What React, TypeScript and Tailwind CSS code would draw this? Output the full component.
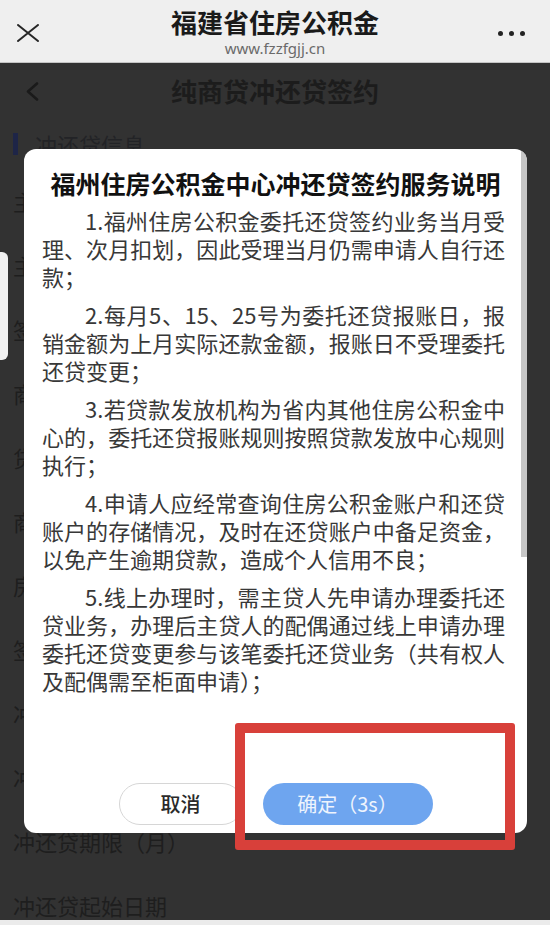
import React from "react";

const cjk = { fontFamily: '"Noto Sans CJK SC", "Noto Sans", sans-serif' };

const rows = [
  "主贷人姓名",
  "主贷人证件号码",
  "签约银行",
  "商贷合同编号",
  "贷款银行",
  "商贷余额（元）",
  "房屋坐落",
  "签约账号",
  "冲还贷方式",
  "冲还贷类型",
  "冲还贷期限（月）",
  "冲还贷起始日期",
];

const paragraphs = [
  ["1.福州住房公积金委托还贷签约业务当月受", "理、次月扣划，因此受理当月仍需申请人自行还", "款；"],
  ["2.每月5、15、25号为委托还贷报账日，报", "销金额为上月实际还款金额，报账日不受理委托", "还贷变更；"],
  ["3.若贷款发放机构为省内其他住房公积金中", "心的，委托还贷报账规则按照贷款发放中心规则", "执行；"],
  ["4.申请人应经常查询住房公积金账户和还贷", "账户的存储情况，及时在还贷账户中备足资金，", "以免产生逾期贷款，造成个人信用不良；"],
  [
    "5.线上办理时，需主贷人先申请办理委托还",
    "贷业务，办理后主贷人的配偶通过线上申请办理",
    "委托还贷变更参与该笔委托还贷业务（共有权人",
    "及配偶需至柜面申请）；",
  ],
];

export default function App() {
  return (
    <div className="relative w-[550px] h-[925px] overflow-hidden flex flex-col bg-[#323232]" style={cjk}>
      {/* browser header */}
      <div className="relative h-[63px] shrink-0 bg-[#efefef] border-b border-[#c4c4c4] flex flex-col items-center pt-[7px]">
        <svg className="absolute left-[17px] top-[24px]" width="22" height="18" viewBox="0 0 22 18">
          <path d="M1 1 L21 17 M21 1 L1 17" stroke="#262626" strokeWidth="2" strokeLinecap="round" />
        </svg>
        <div className="text-[26px] leading-[30px] font-semibold text-[#1a1a1a]">福建省住房公积金</div>
        <div className="text-[15px] leading-[18px] mt-[2px] text-[#6a6a6a]" style={{ fontFamily: '"Noto Sans", sans-serif' }}>
          www.fzzfgjj.cn
        </div>
        <div className="absolute right-[25px] top-[31px] flex gap-[6px]">
          <span className="w-[5px] h-[5px] rounded-full bg-[#222]" />
          <span className="w-[5px] h-[5px] rounded-full bg-[#222]" />
          <span className="w-[5px] h-[5px] rounded-full bg-[#222]" />
        </div>
      </div>

      {/* dimmed page */}
      <div className="relative h-[56px] shrink-0 flex items-center justify-center">
        <svg className="absolute left-[25px] top-[19px]" width="14" height="19" viewBox="0 0 14 19">
          <path d="M12 1.5 L3 9.5 L12 17.5" fill="none" stroke="#1a1a1a" strokeWidth="2.6" strokeLinecap="round" strokeLinejoin="round" />
        </svg>
        <div className="text-[26px] leading-[30px] font-semibold text-[#1c1c1c]">纯商贷冲还贷签约</div>
      </div>

      <div className="h-[50px] shrink-0 flex items-start pt-[14px] pl-[13px]">
        <div className="w-[5px] h-[22px] bg-[#1e2547]" />
        <div className="ml-[17px] -mt-[1px] text-[22px] leading-[24px] text-[#222326]">冲还贷信息</div>
      </div>

      <div className="flex-1 overflow-hidden">
        {rows.map((r) => (
          <div key={r} className="h-[64px] flex items-center pl-[13px] text-[22px] text-[#1e1e1e]">
            {r}
          </div>
        ))}
      </div>
      <div className="h-[5px] shrink-0 bg-[#ebebeb]" />

      {/* floating side tab */}
      <div className="absolute left-0 top-[252px] w-[8px] h-[108px] rounded-r-[6px] bg-[#f1f1f1]" />

      {/* dialog */}
      <div className="absolute left-[24px] top-[149px] w-[503px] h-[684px] rounded-[12px] bg-white overflow-hidden flex flex-col">
        <div className="absolute right-0 top-[2px] w-[6px] h-[406px] bg-[#c6c6c6]" />
        <div className="pt-[17px] text-center text-[25px] leading-[34px] font-bold text-[#111]">
          福州住房公积金中心冲还贷签约服务说明
        </div>
        <div className="mt-[6px] pl-[18px] pr-[22px] text-[22px] leading-[28px] text-[#383838]">
          {paragraphs.map((p, i) => (
            <div key={i} className={i > 0 ? "mt-[10px]" : ""}>
              {p.map((line, j) => (
                <div
                  key={j}
                  className={
                    (j === 0 ? "indent-[43px] " : "") +
                    (j < p.length - 1 ? "text-justify [text-align-last:justify]" : "")
                  }
                >
                  {line}
                </div>
              ))}
            </div>
          ))}
        </div>
        <div className="mt-auto mb-[8px] flex justify-center gap-[20px]">
          <button className="w-[124px] h-[42px] rounded-full border border-[#d6d6d6] bg-white text-[20px] font-medium text-[#2a2a2a]">
            取消
          </button>
          <button className="w-[170px] h-[42px] rounded-full bg-[#6ea5ef] text-[20px] text-[#eef4fd]">
            确定（3s）
          </button>
        </div>
      </div>

      {/* red annotation box */}
      <div className="absolute left-[235px] top-[723px] w-[280px] h-[127px] border-[10px] border-[#d8403a] rounded-[3px]" />
    </div>
  );
}
